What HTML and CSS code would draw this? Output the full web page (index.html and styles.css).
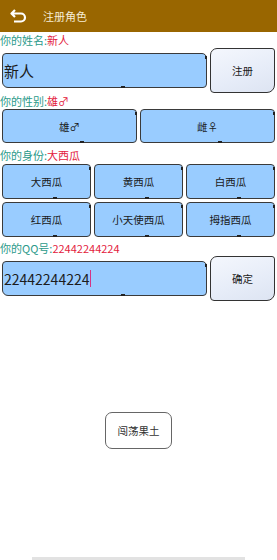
FILE: index.html
```html
<!DOCTYPE html>
<html lang="zh">
<head>
    <meta charset="UTF-8">
    <meta name="viewport" content="width=device-width, initial-scale=1.0">
    <title>注册角色</title>
    <link rel="stylesheet" href="styles.css">
</head>
<body>
    <div class="topBar">
        <svg class="backIcon" width="17" height="14" viewBox="0 0 17 14">
            <path d="M5 1 L1.5 4.5 L5 8 M1.5 4.5 H11 A4 4 0 0 1 11 12.5 H4" fill="none" stroke="#fff" stroke-width="2.2" stroke-linejoin="round"/>
        </svg>
        <span class="topTitle">注册角色</span>
    </div>

    <div class="form">
        <div class="label l1">你的姓名:<span class="value">新人</span></div>
        <div class="inputRow">
            <div class="blueBox inputBox">新人</div>
            <div class="paperBtn">注册</div>
        </div>

        <div class="label l2">你的性别:<span class="value">雄♂</span></div>
        <div class="pairRow">
            <div class="blueBox choice">雄♂</div>
            <div class="blueBox choice">雌♀</div>
        </div>

        <div class="label l3">你的身份:<span class="value">大西瓜</span></div>
        <div class="roleGrid">
            <div class="blueBox choice">大西瓜</div>
            <div class="blueBox choice">黄西瓜</div>
            <div class="blueBox choice">白西瓜</div>
            <div class="blueBox choice">红西瓜</div>
            <div class="blueBox choice">小天使西瓜</div>
            <div class="blueBox choice">拇指西瓜</div>
        </div>

        <div class="label l4">你的QQ号:<span class="value">22442244224</span></div>
        <div class="inputRow">
            <div class="blueBox inputBox qq">22442244224<span class="caret"></span></div>
            <div class="paperBtn">确定</div>
        </div>
    </div>

    <div class="enterWrap">
        <div class="enterBtn">闯荡果土</div>
    </div>

    <div class="bottomBar"></div>
</body>
</html>
```

FILE: styles.css
```css
body {
    margin: 0;
    font-family: "Noto Sans CJK SC", "Noto Sans", sans-serif;
    background-color: #ffffff;
    color: #222;
    min-height: 100vh;
    display: flex;
    flex-direction: column;
}

.topBar {
    height: 32px;
    background-color: #996600;
    display: flex;
    align-items: center;
    padding-left: 10px;
}

.backIcon {
    margin-right: 16px;
}

.topTitle {
    color: #f6ecd6;
    font-size: 11px;
}

.form {
    padding: 0 2px;
}

.label {
    height: 15px;
    line-height: 15px;
    font-size: 11px;
    color: #2b9a8a;
    margin-left: -2px;
}

.label .value {
    color: #e3203c;
}

.l1 { margin-top: 1px; }
.l2 { margin-top: 1px; }
.l3 { margin-top: 5px; }
.l4 { margin-top: 4px; }

.blueBox {
    position: relative;
    background-color: #99ccff;
    border: 1px solid #3a3a3a;
    border-radius: 4px;
    box-sizing: border-box;
}

.blueBox::after {
    content: "";
    position: absolute;
    right: -1px;
    top: 2px;
    width: 2px;
    height: 3px;
    background-color: #222;
}

.blueBox::before {
    content: "";
    position: absolute;
    left: 58%;
    bottom: -1px;
    width: 4px;
    height: 2px;
    background-color: #222;
}

.inputRow {
    display: flex;
    align-items: center;
    gap: 3px;
}

.inputBox {
    flex: 1;
    height: 35px;
    display: flex;
    align-items: center;
    padding-left: 1px;
    font-size: 15px;
    color: #1c1c1c;
    border-radius: 4px 5px 4px 6px;
}

.inputBox.qq {
    font-size: 14px;
}

.caret {
    display: inline-block;
    width: 1px;
    height: 17px;
    margin-left: 1px;
    background-color: #d63384;
}

.paperBtn {
    width: 65px;
    height: 45px;
    box-sizing: border-box;
    border: 1.5px solid #333;
    border-radius: 7px 3px 8px 4px;
    background: linear-gradient(160deg, #f4f7fd 0%, #e6ecf8 60%, #dde4f2 100%);
    display: flex;
    align-items: center;
    justify-content: center;
    font-size: 10.5px;
    color: #1a1a1a;
}

.pairRow {
    display: grid;
    grid-template-columns: 1fr 1fr;
    gap: 3px;
}

.roleGrid {
    margin-top: 1px;
    display: grid;
    grid-template-columns: repeat(3, 1fr);
    gap: 3px;
}

.choice {
    height: 35px;
    display: flex;
    align-items: center;
    justify-content: center;
    font-size: 10.5px;
    color: #1a1a1a;
}

.pairRow .choice {
    height: 34px;
}

.enterWrap {
    display: flex;
    justify-content: center;
    margin-top: 111px;
}

.enterBtn {
    width: 67px;
    height: 37px;
    box-sizing: border-box;
    border: 1px solid #666;
    border-radius: 7px;
    background-color: #fff;
    display: flex;
    align-items: center;
    justify-content: center;
    font-size: 10.5px;
    color: #333;
}

.bottomBar {
    margin-top: auto;
    align-self: center;
    width: 213px;
    height: 3px;
    background-color: #e2e2e2;
}
```
